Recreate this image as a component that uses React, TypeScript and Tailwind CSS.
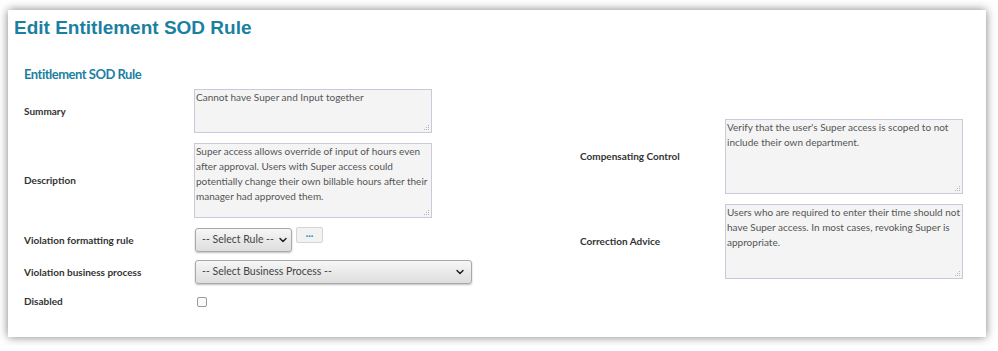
import { ChevronDown } from 'lucide-react';

const label = 'text-[10px] font-bold text-[#333]';
const area =
  'block w-[238px] resize-none border border-[#c9c9d9] bg-[#f4f4f4] px-[1px] py-0 text-[10px] leading-[15px] text-[#555] outline-none';

function Grip() {
  return (
    <svg className="absolute right-[2px] bottom-[2px]" width="7" height="7" viewBox="0 0 7 7">
      {[
        [5, 1],
        [3, 3],
        [5, 3],
        [1, 5],
        [3, 5],
        [5, 5],
      ].map(([x, y]) => (
        <rect key={`${x}-${y}`} x={x} y={y} width="1" height="1" fill="#b5b5c0" />
      ))}
    </svg>
  );
}

function Area({ h, text }: { h: string; text: string }) {
  return (
    <div className="relative">
      <textarea readOnly className={`${area} ${h}`} defaultValue={text} />
      <Grip />
    </div>
  );
}

function Field({ title, children, h }: { title: string; children: React.ReactNode; h?: string }) {
  return (
    <div className={`flex items-center ${h ?? ''}`}>
      <div className={`w-[170px] shrink-0 ${label}`}>{title}</div>
      {children}
    </div>
  );
}

function SelectBox({ text, width }: { text: string; width: string }) {
  return (
    <div
      className={`flex h-[24px] items-center justify-between gap-[3px] whitespace-nowrap rounded-[3px] border border-[#a9a9a9] bg-gradient-to-b from-[#f6f6f6] to-[#dedede] pl-[6px] pr-[5px] text-[10.5px] text-[#444] shadow-[0_1px_2px_rgba(0,0,0,0.25)] ${width}`}
    >
      <span>{text}</span>
      <ChevronDown className="size-[12px] shrink-0 text-[#222]" strokeWidth={3} />
    </div>
  );
}

export default function App() {
  return (
    <div className="h-[351px] w-[998px] bg-white pt-[10px] pl-[8px] font-['Lato','Open_Sans',sans-serif]">
      <div className="h-[327px] w-[978px] bg-white shadow-[0_0_9px_rgba(0,0,0,0.5)]">
        {/* Header */}
        <h1 className="pl-[6px] pt-[7px] font-['Liberation_Sans',Arial,sans-serif] text-[19px] leading-[22px] font-bold text-[#1b7fa2]">
          Edit Entitlement SOD Rule
        </h1>
        <h2 className="pl-[16px] pt-[27px] text-[13px] leading-[17px] font-bold tracking-[-0.5px] text-[#1b7fa2]">
          Entitlement SOD Rule
        </h2>

        <div className="flex items-center pl-[16px] pt-[6px]">
          {/* Left column */}
          <div className="flex w-[556px] flex-col">
            <Field title="Summary">
              <Area h="h-[44px]" text="Cannot have Super and Input together" />
            </Field>
            <Field title="Description" h="mt-[10px]">
              <Area
                h="h-[75px]"
                text="Super access allows override of input of hours even after approval. Users with Super access could potentially change their own billable hours after their manager had approved them."
              />
            </Field>
            <Field title="Violation formatting rule" h="mt-[10px]">
              <div className="flex items-start gap-[4px] pl-[1px]">
                <SelectBox text="-- Select Rule --" width="w-[97px]" />
                <div className="-mt-[1px] flex h-[16px] w-[27px] items-center justify-center rounded-[2px] border border-[#d4d4d4] bg-[#f2f2f2] text-[9px] leading-none font-bold text-[#2f8cc4]">
                  ···
                </div>
              </div>
            </Field>
            <Field title="Violation business process" h="mt-[8px]">
              <div className="pl-[1px]">
                <SelectBox text="-- Select Business Process --" width="w-[277px]" />
              </div>
            </Field>
            <Field title="Disabled" h="mt-[10px]">
              <div className="ml-[3px] h-[10px] w-[10px] rounded-[2px] border border-[#9a9a9a] bg-[#fafafa]" />
            </Field>
          </div>

          {/* Right column */}
          <div className="flex flex-col gap-[10px]">
            <div className="flex items-center">
              <div className={`w-[145px] shrink-0 ${label}`}>Compensating Control</div>
              <Area
                h="h-[75px]"
                text="Verify that the user's Super access is scoped to not include their own department."
              />
            </div>
            <div className="flex items-center">
              <div className={`w-[145px] shrink-0 ${label}`}>Correction Advice</div>
              <Area
                h="h-[75px]"
                text="Users who are required to enter their time should not have Super access. In most cases, revoking Super is appropriate."
              />
            </div>
          </div>
        </div>
      </div>
    </div>
  );
}
